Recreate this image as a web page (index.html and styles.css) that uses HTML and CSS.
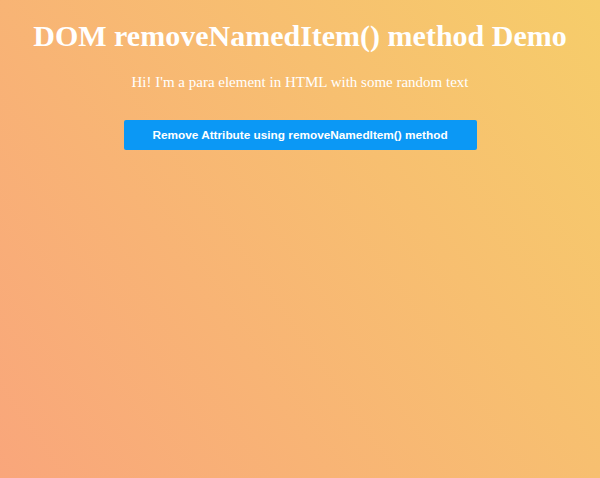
FILE: index.html
```html
<!DOCTYPE html>
<html>
<head>
    <title>removeNamedItem() Demo</title>
    <link rel="stylesheet" href="styles.css">
</head>
<body>
    <div class="page">
        <h1>DOM removeNamedItem() method Demo</h1>
        <p id="para" class="para" title="random">Hi! I'm a para element in HTML with some random text</p>
        <button type="button" class="remove-button" onclick="removeAttr()">Remove Attribute using removeNamedItem() method</button>
    </div>

    <script>
        function removeAttr() {
            const para = document.getElementById("para");
            if (para.attributes.getNamedItem("title")) {
                para.attributes.removeNamedItem("title");
            }
        }
    </script>
</body>
</html>
```

FILE: styles.css
```css
html, body {
    height: 100%;
}

body {
    margin: 0;
    padding: 0;
    font-family: "Liberation Serif", "Times New Roman", serif;
    color: white;
    background-image: linear-gradient(55deg, #f9a67b, #f6cd6a);
}

.page {
    display: flex;
    flex-direction: column;
    align-items: center;
}

h1 {
    font-size: 30px;
    margin: 19px 0 0 0;
}

.para {
    font-size: 15px;
    margin: 21px 0 0 0;
}

.remove-button {
    width: 353px;
    height: 30px;
    margin-top: 29px;
    border: none;
    border-radius: 2px;
    background-color: #0b98f5;
    color: white;
    font-family: "Liberation Sans", Arial, sans-serif;
    font-size: 11.8px;
    font-weight: bold;
    cursor: pointer;
}
```
